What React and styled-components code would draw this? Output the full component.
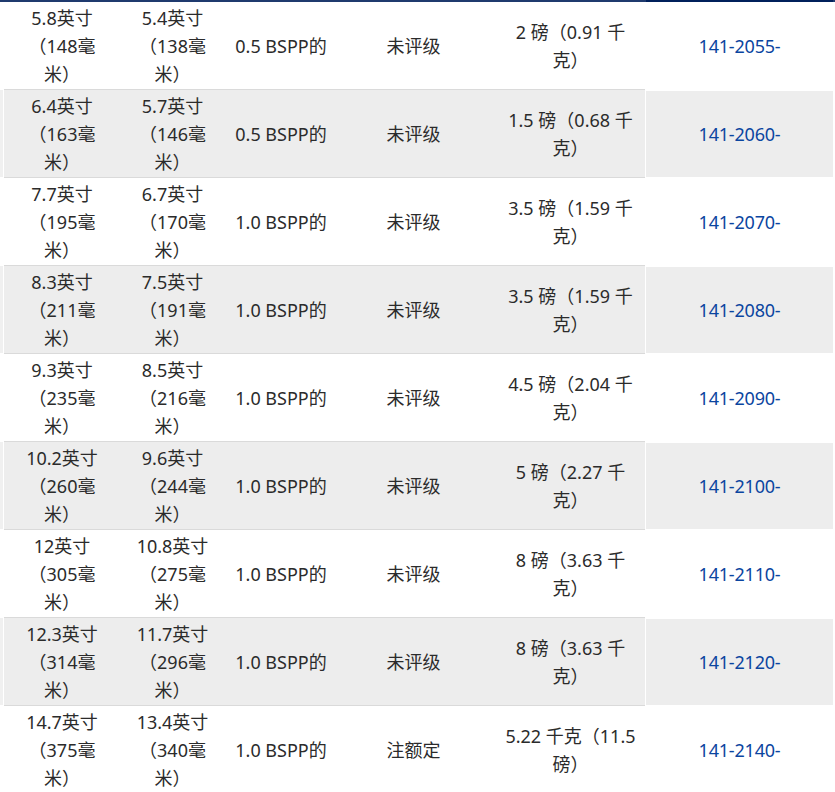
import React from 'react';
import styled, { createGlobalStyle } from 'styled-components';

const GlobalStyle = createGlobalStyle`
  html, body {
    margin: 0;
    padding: 0;
    background: #ffffff;
    overflow: hidden;
  }
  body {
    font-family: "Noto Sans", "Noto Sans CJK SC", sans-serif;
    color: #2b2b2b;
  }
`;

const Page = styled.div`
  width: 835px;
  border-top: 2px solid #1f3a6e;
`;

const Row = styled.div`
  display: flex;
  align-items: stretch;
`;

const Stub = styled.div`
  width: 3px;
  margin: 0 1px 1px 0;
  background: ${({ $striped }) => ($striped ? '#f0f0f0' : '#ffffff')};
`;

const Main = styled.div`
  display: grid;
  grid-template-columns: 116px 105px 112px 153px 155px;
  align-items: center;
  border-bottom: 1px solid #dadada;
  background: ${({ $striped }) => ($striped ? '#ededed' : 'transparent')};
`;

const Cell = styled.div`
  font-size: 18px;
  line-height: 28px;
  text-align: center;
  padding: 1.5px ${({ $pr }) => $pr || 8}px 1.5px ${({ $pl }) => $pl || 8}px;
`;

const PartCell = styled.div`
  width: 187px;
  margin: ${({ $first }) => ($first ? '-2px' : '1px')} 2px 1px 1px;
  border-top: ${({ $first }) => ($first ? '2px solid #00205b' : 'none')};
  display: flex;
  align-items: center;
  justify-content: center;
  background: ${({ $striped }) => ($striped ? '#ededed' : 'transparent')};
`;

const PartLink = styled.a`
  font-size: 18px;
  color: #0b45a0;
  text-decoration: none;
  letter-spacing: -0.2px;
`;

const rows = [
  ['5.8英寸（148毫米）', '5.4英寸（138毫米）', '0.5 BSPP的', '未评级', '2 磅（0.91 千克）', '141-2055-'],
  ['6.4英寸（163毫米）', '5.7英寸（146毫米）', '0.5 BSPP的', '未评级', '1.5 磅（0.68 千克）', '141-2060-'],
  ['7.7英寸（195毫米）', '6.7英寸（170毫米）', '1.0 BSPP的', '未评级', '3.5 磅（1.59 千克）', '141-2070-'],
  ['8.3英寸（211毫米）', '7.5英寸（191毫米）', '1.0 BSPP的', '未评级', '3.5 磅（1.59 千克）', '141-2080-'],
  ['9.3英寸（235毫米）', '8.5英寸（216毫米）', '1.0 BSPP的', '未评级', '4.5 磅（2.04 千克）', '141-2090-'],
  ['10.2英寸（260毫米）', '9.6英寸（244毫米）', '1.0 BSPP的', '未评级', '5 磅（2.27 千克）', '141-2100-'],
  ['12英寸（305毫米）', '10.8英寸（275毫米）', '1.0 BSPP的', '未评级', '8 磅（3.63 千克）', '141-2110-'],
  ['12.3英寸（314毫米）', '11.7英寸（296毫米）', '1.0 BSPP的', '未评级', '8 磅（3.63 千克）', '141-2120-'],
  ['14.7英寸（375毫米）', '13.4英寸（340毫米）', '1.0 BSPP的', '注额定', '5.22 千克（11.5 磅）', '141-2140-'],
];

export default function App() {
  return (
    <Page>
      <GlobalStyle />
      {rows.map(([length, opening, port, rating, weight, part], i) => {
        const striped = i % 2 === 1;
        return (
          <Row key={part}>
            <Stub $striped={striped} />
            <Main $striped={striped}>
              <Cell $pl={20} $pr={20}>{length}</Cell>
              <Cell $pl={14} $pr={14}>{opening}</Cell>
              <Cell $pl={6} $pr={6}>{port}</Cell>
              <Cell>{rating}</Cell>
              <Cell $pl={14} $pr={8}>{weight}</Cell>
            </Main>
            <PartCell $striped={striped} $first={i === 0}>
              <PartLink href="#">{part}</PartLink>
            </PartCell>
          </Row>
        );
      })}
    </Page>
  );
}
